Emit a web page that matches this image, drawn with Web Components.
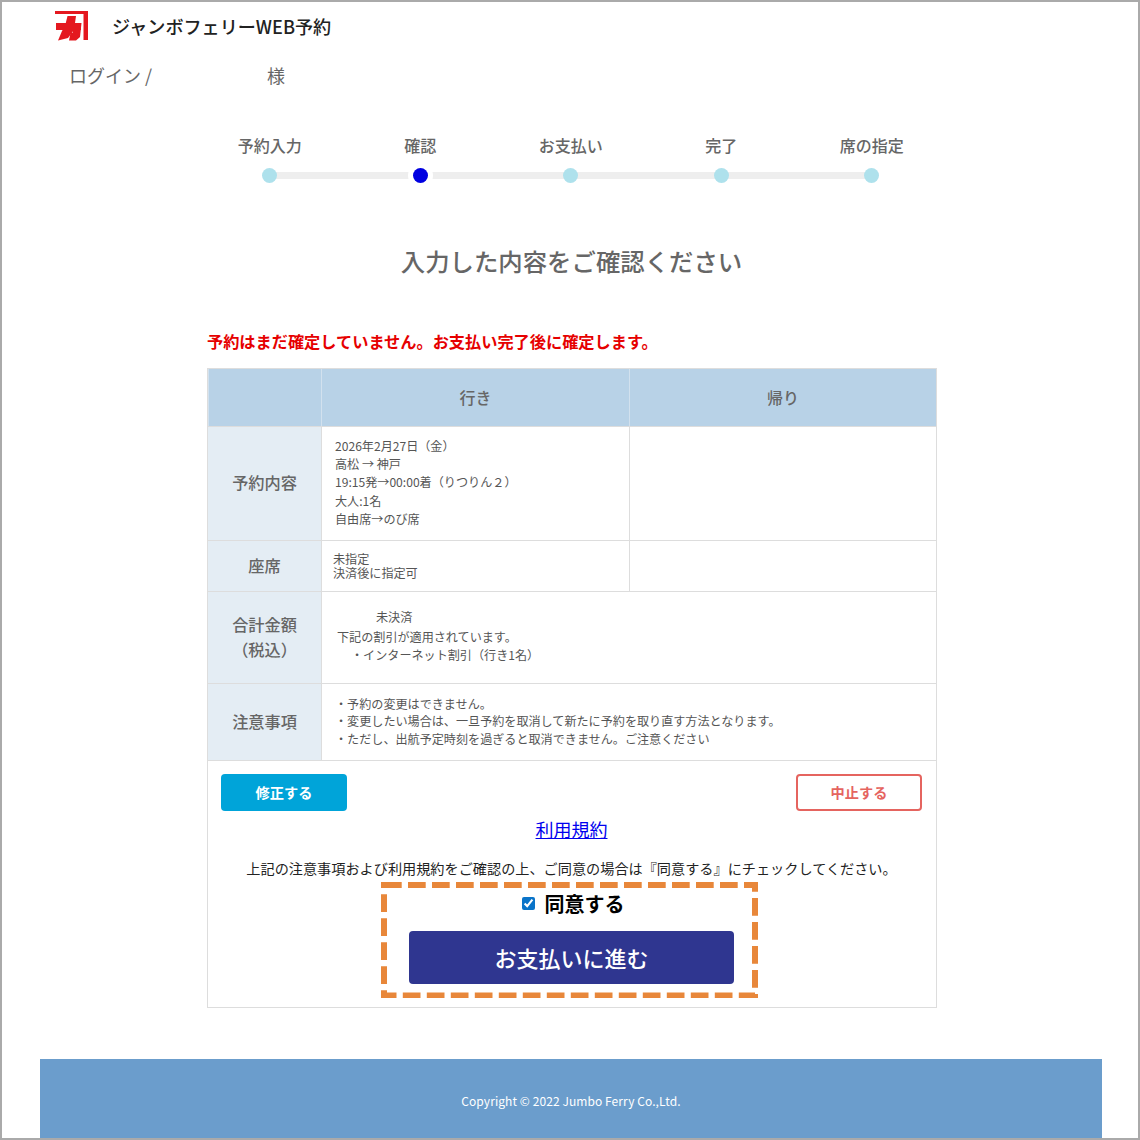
<!DOCTYPE html>
<html lang="ja">
<head>
<meta charset="utf-8">
<title>ジャンボフェリーWEB予約</title>
<style>
  html, body { margin: 0; padding: 0; background: #fff; }
  body { font-family: "Noto Sans CJK JP", "Noto Sans", sans-serif; }
  jf-row div { white-space: pre; }
</style>
</head>
<body>
<jf-page>
  <jf-header></jf-header>
  <jf-stepper>
    <jf-step>予約入力</jf-step>
    <jf-step current>確認</jf-step>
    <jf-step>お支払い</jf-step>
    <jf-step>完了</jf-step>
    <jf-step>席の指定</jf-step>
  </jf-stepper>
  <jf-intro></jf-intro>
  <jf-confirm>
    <jf-head></jf-head>
    <jf-row label="予約内容" split>
      <jf-lines slot="out" style="--lh:18.3px;--pl:13px">
        <div>2026年2月27日（金）</div>
        <div>高松 → 神戸</div>
        <div>19:15発→00:00着（りつりん２）</div>
        <div>大人:1名</div>
        <div>自由席→のび席</div>
      </jf-lines>
    </jf-row>
    <jf-row label="座席" split style="--h:51px">
      <jf-lines slot="out" style="--lh:14.5px;--pl:11px;padding-top:2px">
        <div>未指定</div>
        <div>決済後に指定可</div>
      </jf-lines>
    </jf-row>
    <jf-row label="合計金額&#10;（税込）" style="--h:92px">
      <jf-lines slot="out" style="--lh:18px;--pl:15px;padding-bottom:2px">
        <div style="margin:0 0 2px 39px">未決済</div>
        <div>下記の割引が適用されています。</div>
        <div style="margin-left:14px">・インターネット割引（行き1名）</div>
      </jf-lines>
    </jf-row>
    <jf-row label="注意事項" style="--h:77px">
      <jf-lines slot="out" style="--lh:17.5px;--pl:13px">
        <div>・予約の変更はできません。</div>
        <div>・変更したい場合は、一旦予約を取消して新たに予約を取り直す方法となります。</div>
        <div>・ただし、出航予定時刻を過ぎると取消できません。ご注意ください</div>
      </jf-lines>
    </jf-row>
    <jf-actions></jf-actions>
  </jf-confirm>
  <jf-footer>Copyright © 2022 Jumbo Ferry Co.,Ltd.</jf-footer>
</jf-page>

<script>
class JfPage extends HTMLElement {
  connectedCallback() {
    this.attachShadow({mode: 'open'}).innerHTML = `
      <style>
        :host {
          display: flex;
          flex-direction: column;
          box-sizing: border-box;
          width: 1140px;
          height: 1140px;
          border: 2px solid #aaa;
          overflow: hidden;
          background: #fff;
        }
      </style>
      <slot></slot>
    `;
  }
}
customElements.define('jf-page', JfPage);

class JfHeader extends HTMLElement {
  connectedCallback() {
    this.attachShadow({mode: 'open'}).innerHTML = `
      <style>
        :host { display: block; padding: 9px 0 0 53px; }
        .brand { display: flex; align-items: center; height: 30px; }
        svg { width: 33px; height: 30px; flex: none; filter: blur(.5px); }
        .title {
          margin-left: 24px;
          font-size: 18.100px;
          line-height: 26px;
          font-weight: 500;
          color: #222;
        }
        .login {
          display: flex;
          margin: 21px 0 0 14px;
          font-size: 18px;
          line-height: 26px;
          color: #666;
        }
        .user { width: 198px; }
      </style>
      <div class="brand">
        <svg viewBox="0 0 33 30" aria-hidden="true">
          <g fill="#e4181f">
            <path d="M0 0H33V3H0Z"/>
            <path d="M28.500 0H33V29H28.500Z"/>
            <path d="M1 12H26V19H1Z"/>
            <path d="M12.500 5H21L19 19L13 27L3 29.500L7 20L10 15Z"/>
            <path d="M18 12H26.500L25 26L21 29.500H14L15.500 22L18 21.500Z"/>
          </g>
        </svg>
        <span class="title">ジャンボフェリーWEB予約</span>
      </div>
      <div class="login"><span class="user">ログイン /</span><span>様</span></div>
    `;
  }
}
customElements.define('jf-header', JfHeader);

class JfStepper extends HTMLElement {
  connectedCallback() {
    this.attachShadow({mode: 'open'}).innerHTML = `
      <style>
        :host {
          display: grid;
          grid-template-columns: repeat(5, 150.5px);
          margin: 45px 0 0 192.500px;
          background: linear-gradient(#eee, #eee) 75px calc(100% - 4px) / 602px 7px no-repeat;
        }
      </style>
      <slot></slot>
    `;
  }
}
customElements.define('jf-stepper', JfStepper);

class JfStep extends HTMLElement {
  connectedCallback() {
    this.attachShadow({mode: 'open'}).innerHTML = `
      <style>
        :host {
          display: flex;
          flex-direction: column;
          align-items: center;
          font-size: 16px;
          line-height: 24px;
          font-weight: 500;
          color: #666;
        }
        .dot {
          width: 15px;
          height: 15px;
          margin-top: 11px;
          border-radius: 50%;
          background: #aee1ec;
        }
        :host([current]) .dot { background: #0000e1; box-shadow: 0 0 0 5px #fff; }
      </style>
      <slot></slot>
      <div class="dot"></div>
    `;
  }
}
customElements.define('jf-step', JfStep);

class JfIntro extends HTMLElement {
  connectedCallback() {
    this.attachShadow({mode: 'open'}).innerHTML = `
      <style>
        :host { display: block; }
        h1 {
          margin: 60px 0 0 3px;
          text-align: center;
          font-size: 24.400px;
          line-height: 36px;
          font-weight: 500;
          color: #666;
        }
        p {
          margin: 50px 0 0 205px;
          font-size: 16.200px;
          line-height: 24px;
          font-weight: 700;
          color: #e60000;
        }
      </style>
      <h1>入力した内容をご確認ください</h1>
      <p>予約はまだ確定していません。お支払い完了後に確定します。</p>
    `;
  }
}
customElements.define('jf-intro', JfIntro);

class JfConfirm extends HTMLElement {
  connectedCallback() {
    this.attachShadow({mode: 'open'}).innerHTML = `
      <style>
        :host {
          display: block;
          box-sizing: border-box;
          width: 730px;
          margin: 15px 0 0 205px;
          border: 1px solid #ddd;
        }
      </style>
      <slot></slot>
    `;
  }
}
customElements.define('jf-confirm', JfConfirm);

class JfHead extends HTMLElement {
  connectedCallback() {
    this.attachShadow({mode: 'open'}).innerHTML = `
      <style>
        :host {
          display: grid;
          grid-template-columns: 113px 308px 1fr;
          height: 57px;
          background: #b8d2e7;
          font-size: 16px;
          font-weight: 500;
          color: #666;
        }
        div {
          display: flex;
          align-items: center;
          justify-content: center;
          padding-bottom: 2px;
          border-left: 1px solid #d2e1ee;
        }
        div:first-child { border-left: 0; }
      </style>
      <div></div><div>行き</div><div>帰り</div>
    `;
  }
}
customElements.define('jf-head', JfHead);

class JfRow extends HTMLElement {
  connectedCallback() {
    const label = this.getAttribute('label');
    const back = this.hasAttribute('split') ? '<div class="cell"><slot name="back"></slot></div>' : '';
    this.attachShadow({mode: 'open'}).innerHTML = `
      <style>
        :host {
          display: grid;
          grid-template-columns: 113px 1fr;
          box-sizing: border-box;
          height: var(--h, 114px);
          border-top: 1px solid #ddd;
        }
        :host([split]) { grid-template-columns: 113px 308px 1fr; }
        .label {
          display: flex;
          align-items: center;
          justify-content: center;
          padding-bottom: 2px;
          text-align: center;
          white-space: pre;
          background: #e4edf4;
          font-size: 16.200px;
          line-height: 25px;
          font-weight: 500;
          color: #666;
        }
        .cell {
          display: flex;
          align-items: center;
          padding-bottom: 2px;
          border-left: 1px solid #ddd;
        }
      </style>
      <div class="label">${label}</div>
      <div class="cell"><slot name="out"></slot></div>
      ${back}
    `;
  }
}
customElements.define('jf-row', JfRow);

class JfLines extends HTMLElement {
  connectedCallback() {
    this.attachShadow({mode: 'open'}).innerHTML = `
      <style>
        :host {
          display: block;
          padding-left: var(--pl, 12px);
          font-size: 12.100px;
          line-height: var(--lh, 18px);
          color: #555;
        }
      </style>
      <slot></slot>
    `;
  }
}
customElements.define('jf-lines', JfLines);

class JfActions extends HTMLElement {
  connectedCallback() {
    this.attachShadow({mode: 'open'}).innerHTML = `
      <style>
        :host {
          display: block;
          position: relative;
          box-sizing: border-box;
          height: 247px;
          border-top: 1px solid #ddd;
          padding: 13px 14px 0 13px;
          text-align: center;
        }
        .btns { display: flex; justify-content: space-between; }
        .btn {
          box-sizing: border-box;
          width: 126px;
          height: 37px;
          display: flex;
          align-items: center;
          justify-content: center;
          padding-bottom: 2px;
          border-radius: 4px;
          font-size: 14.200px;
          font-weight: 700;
        }
        .fix { background: #00a4d9; color: #fff; }
        .stop { border: 2px solid #e5645f; color: #e5645f; }
        a {
          display: block;
          width: max-content;
          margin: 5px auto 0;
          font-size: 18px;
          line-height: 26px;
          color: #0000ee;
        }
        .note {
          margin: 16px -4px 0;
          font-size: 14.170px;
          line-height: 20px;
          color: #222;
        }
        .agree {
          display: flex;
          align-items: center;
          justify-content: center;
          margin: 11px 0 0 3px;
          height: 28px;
          font-size: 20px;
          font-weight: 700;
          color: #000;
        }
        input {
          width: 13px;
          height: 13px;
          margin: 0 10px 0 0;
          accent-color: #0a74c9;
        }
        .pay {
          display: flex;
          align-items: center;
          justify-content: center;
          box-sizing: border-box;
          width: 325px;
          height: 53px;
          margin: 14px auto 0;
          padding-bottom: 2px;
          border-radius: 4px;
          background: #2f3690;
          color: #fff;
          font-size: 22px;
          font-weight: 500;
        }
        svg {
          position: absolute;
          left: 173px;
          top: 120.500px;
          width: 377px;
          height: 116.500px;
          pointer-events: none;
        }
      </style>
      <div class="btns">
        <div class="btn fix">修正する</div>
        <div class="btn stop">中止する</div>
      </div>
      <a href="#">利用規約</a>
      <div class="note">上記の注意事項および利用規約をご確認の上、ご同意の場合は『同意する』にチェックしてください。</div>
      <label class="agree"><input type="checkbox" checked>同意する</label>
      <div class="pay">お支払いに進む</div>
      <svg viewBox="0 0 377 116.500" fill="none" stroke="#e8873a" stroke-width="6" aria-hidden="true">
        <rect x="3" y="3" width="371" height="110.500" stroke-dasharray="17.700 6.300"/>
      </svg>
    `;
  }
}
customElements.define('jf-actions', JfActions);

class JfFooter extends HTMLElement {
  connectedCallback() {
    this.attachShadow({mode: 'open'}).innerHTML = `
      <style>
        :host {
          display: flex;
          align-items: center;
          justify-content: center;
          box-sizing: border-box;
          width: 1062px;
          height: 79px;
          margin: auto 0 0 38px;
          padding-top: 3px;
          background: #6b9dcc;
          color: #fff;
          font-size: 12px;
          letter-spacing: .08px;
        }
      </style>
      <slot></slot>
    `;
  }
}
customElements.define('jf-footer', JfFooter);
</script>
</body>
</html>
